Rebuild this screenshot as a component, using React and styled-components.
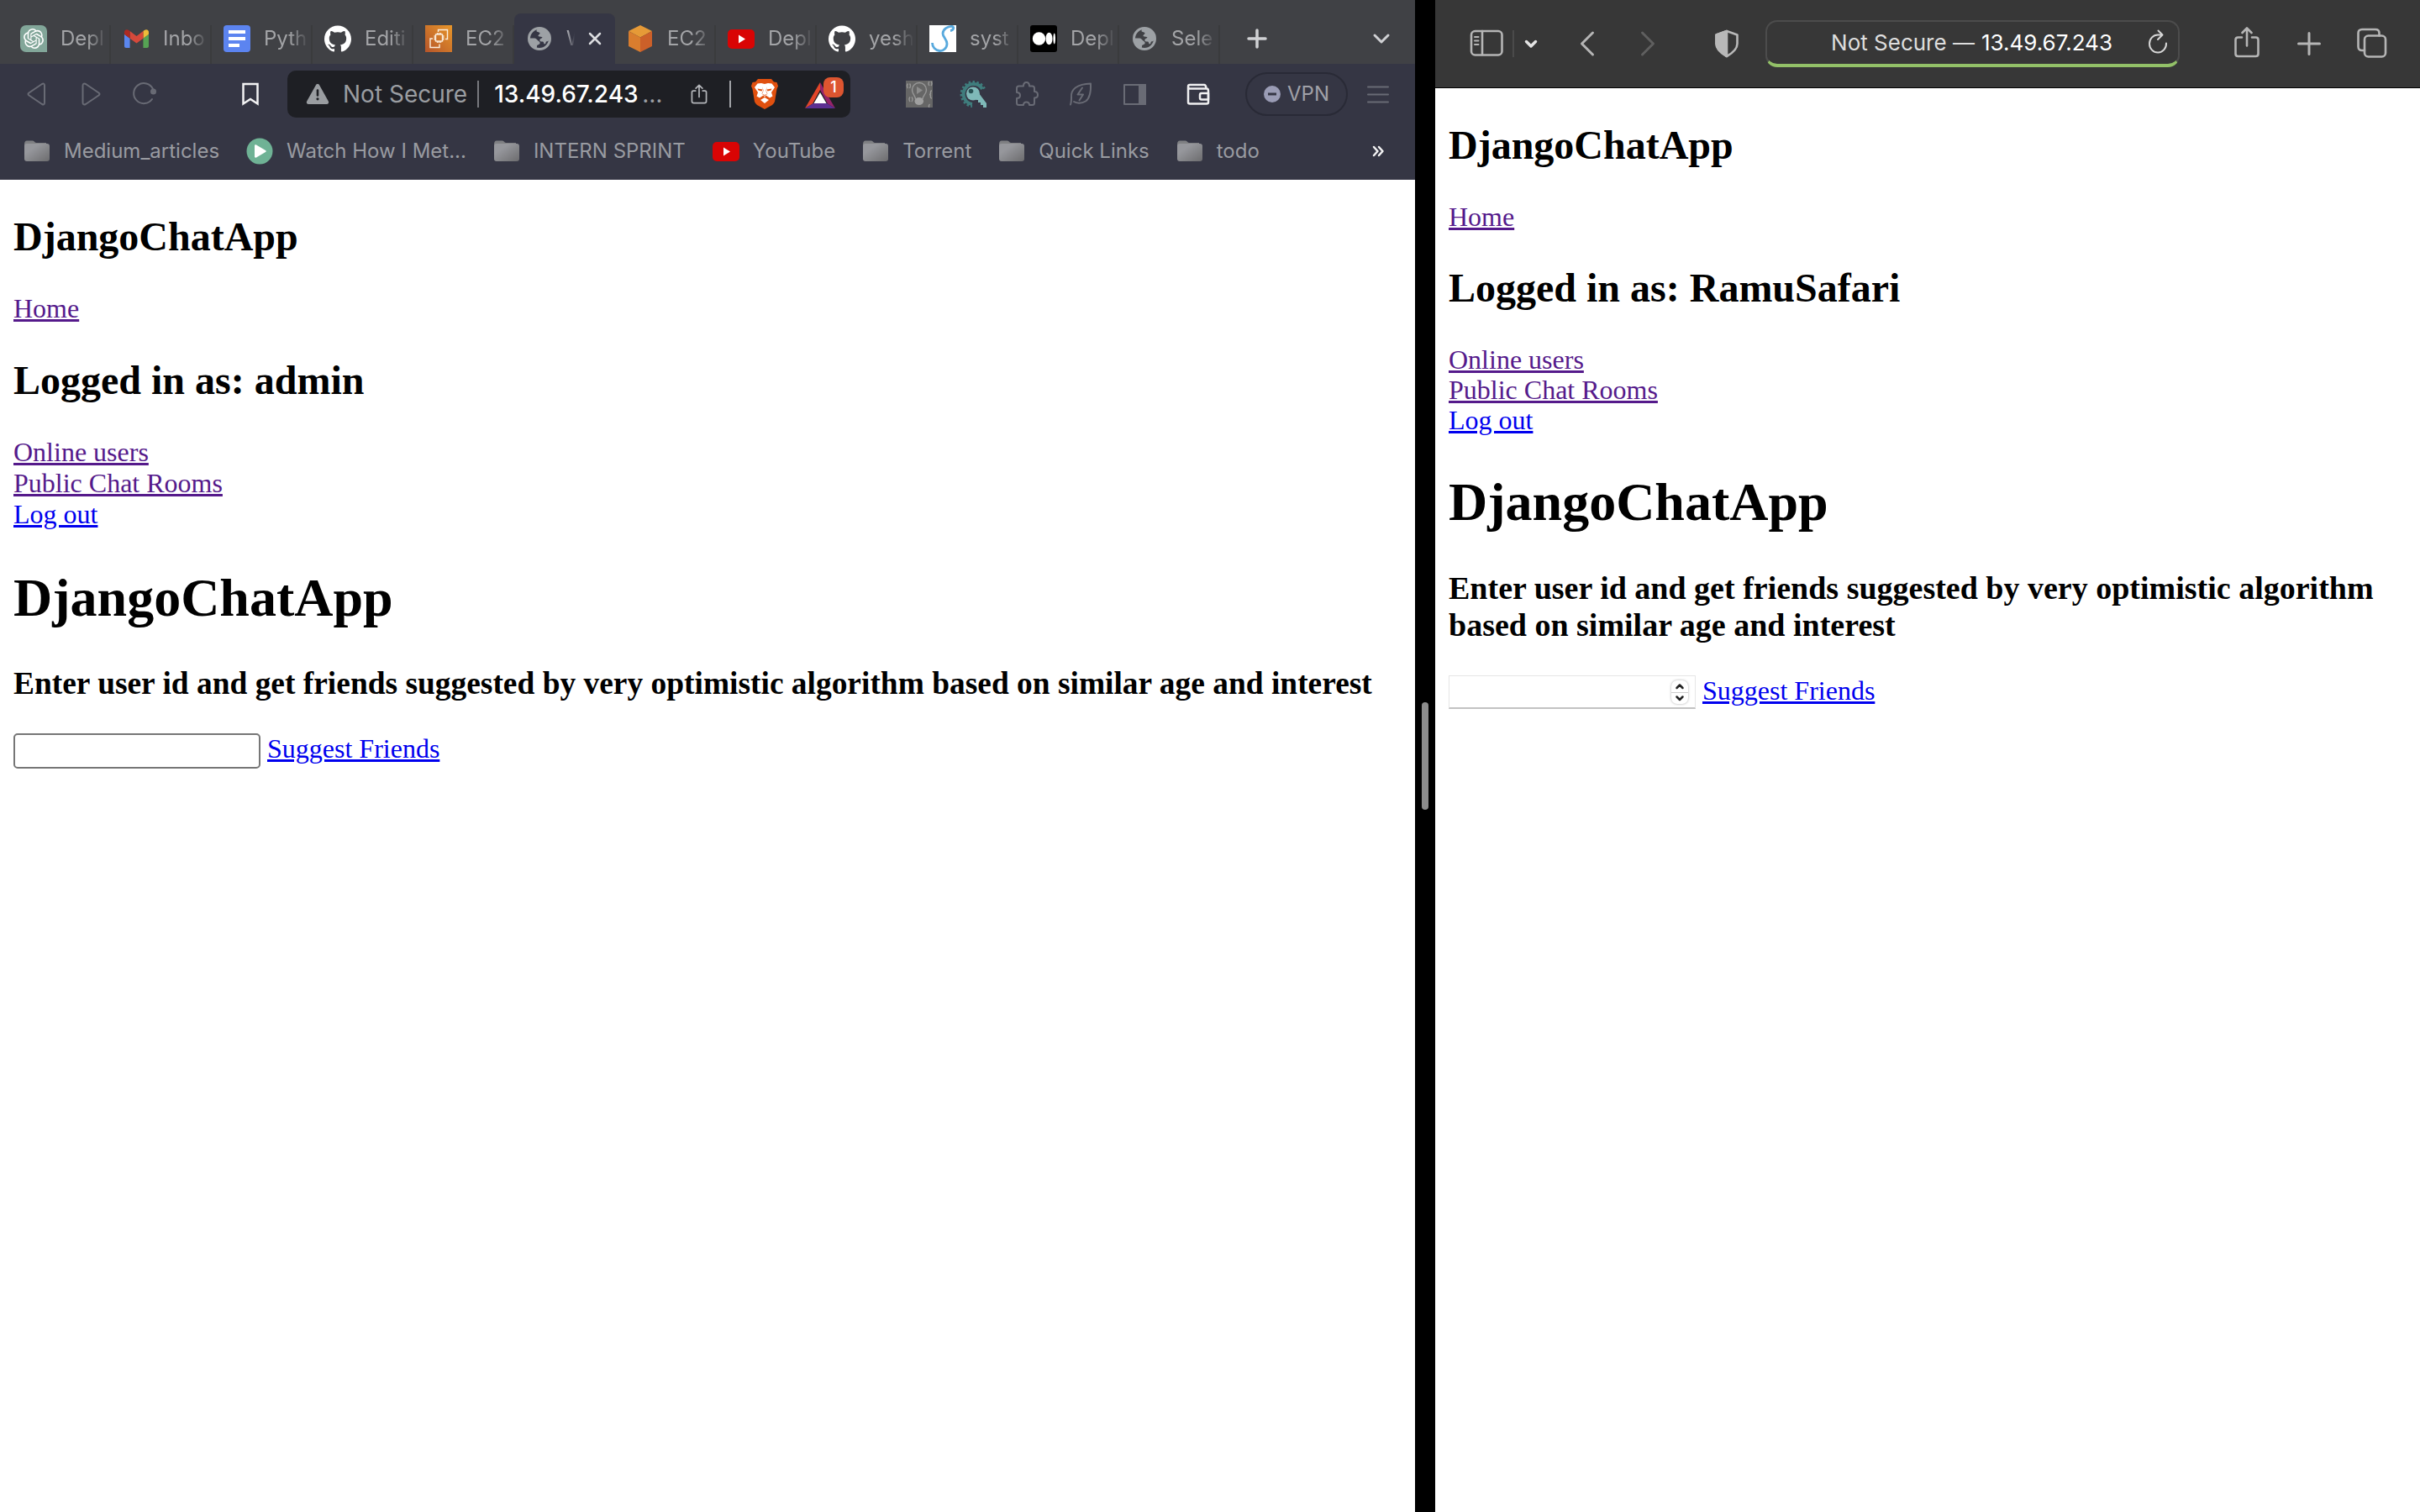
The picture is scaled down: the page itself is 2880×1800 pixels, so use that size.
import React from "react";
import styled, { createGlobalStyle } from "styled-components";
import { SiGithub, SiOpenai } from "react-icons/si";

const GlobalStyle = createGlobalStyle`
  body {
    margin: 0;
    background: #000;
  }
  *, *::before, *::after {
    box-sizing: border-box;
  }
`;

const ui = `Inter, Roboto, "Liberation Sans", sans-serif`;

/* ---------- split screen ---------- */

const SplitScreen = styled.div`
  display: grid;
  grid-template-columns: minmax(0, 1684fr) 24px minmax(0, 1172fr);
  min-height: 100vh;
`;

const Pane = styled.div`
  display: flex;
  flex-direction: column;
  background: #fff;
`;

const Divider = styled.div`
  display: flex;
  align-items: center;
  justify-content: center;
  background: #000;
`;

const Grip = styled.div`
  width: 8px;
  height: 128px;
  border-radius: 4px;
  background: #8c8c8c;
`;

const IconButton = styled.button`
  display: flex;
  flex: none;
  align-items: center;
  justify-content: center;
  width: ${(p) => p.$width || 32}px;
  height: ${(p) => p.$height || 32}px;
  margin: 0;
  padding: 0;
  border: 0;
  background: none;
  color: ${(p) => p.$color || "#696b75"};
  cursor: pointer;
`;

/* ---------- dark browser ---------- */

const TabStrip = styled.div`
  display: flex;
  align-items: flex-end;
  height: 76px;
  padding: 0 24px 0 10px;
  background: #404145;
`;

const Tabs = styled.div`
  display: flex;
  margin-right: 28px;
`;

const Tab = styled.div`
  display: flex;
  align-items: center;
  gap: 16px;
  width: 120px;
  height: 60px;
  padding: 0 4px 0 14px;
  border-radius: 8px 8px 0 0;
  color: #a3a4a7;
  background: ${(p) =>
    p.$active
      ? "#353644"
      : "linear-gradient(#3a3b3d, #3a3b3d) right bottom / 2px 46px no-repeat"};
  ${(p) => p.$active && "padding-right: 16px; color: #dcdde0;"}

  &:first-child {
    width: 122px;
  }
`;

const TabIcon = styled.span`
  display: flex;
  flex: none;
  align-items: center;
  justify-content: center;
  width: 32px;
  height: 32px;
`;

const TabTitle = styled.span`
  flex: 1;
  overflow: hidden;
  white-space: nowrap;
  font: 24px/32px ${ui};
  mask-image: linear-gradient(to left, transparent, #000 ${(p) => (p.$active ? 12 : 24)}px);
`;

const TabListButton = styled(IconButton)`
  margin-left: auto;
`;

const StripButtonRow = styled.div`
  display: flex;
  flex: 1;
  align-items: center;
  height: 60px;
`;

const Toolbar = styled.div`
  display: flex;
  align-items: center;
  padding: 8px 28px 6px;
  background: #353644;
`;

const ButtonGroup = styled.div`
  display: flex;
  align-items: center;
  gap: 32px;
`;

const AddressBar = styled.div`
  display: flex;
  flex: 1;
  align-items: center;
  min-width: 0;
  height: 56px;
  margin: 0 66px 0 28px;
  padding: 0 8px 0 22px;
  border-radius: 10px;
  background: #1e1f24;
  font: 28px/36px ${ui};
  color: #9a9da1;
`;

const SpacedGroup = styled(ButtonGroup)`
  margin-right: 94px;
`;

const SecurityNote = styled.span`
  flex: none;
  margin: 0 12px 0 16px;
`;

const Rule = styled.span`
  flex: none;
  width: 2px;
  height: 32px;
  background: ${(p) => p.$color || "#77797d"};
`;

const UrlInput = styled.input`
  flex: none;
  width: 176px;
  height: 36px;
  margin: 0 0 0 18px;
  padding: 0;
  border: 0;
  outline: 0;
  background: none;
  color: #fff;
  font: inherit;
  font-weight: 500;
`;

const AddressActions = styled.div`
  display: flex;
  align-items: center;
  gap: 24px;
  margin-left: auto;
`;

const RewardsButton = styled(IconButton)`
  position: relative;
  justify-content: flex-start;
  margin-left: 8px;
`;

const Badge = styled.span`
  position: absolute;
  top: 0;
  right: 0;
  width: 24px;
  height: 24px;
  border-radius: 8px;
  background: #dd5530;
  color: #fff;
  font: 500 18px/24px ${ui};
  text-align: center;
`;

const VpnButton = styled.button`
  display: flex;
  flex: none;
  align-items: center;
  justify-content: center;
  gap: 8px;
  width: 122px;
  height: 52px;
  margin: 0 20px 0 40px;
  padding: 0;
  border: 2px solid #292a36;
  border-radius: 26px;
  background: none;
  color: #a0a1a8;
  font: 24px/32px ${ui};
`;

const WalletButton = styled(IconButton)`
  margin-left: 44px;
`;

const BookmarksBar = styled.div`
  display: flex;
  align-items: center;
  gap: 32px;
  height: 68px;
  padding: 0 28px;
  background: #353644;
`;

const Bookmark = styled.a`
  display: flex;
  align-items: center;
  gap: 16px;
  color: #999ba1;
  font: 24px/32px ${ui};
  text-decoration: none;
  white-space: nowrap;
`;

const MoreBookmarks = styled(IconButton)`
  margin-left: auto;
`;

/* ---------- light browser ---------- */

const SafariBar = styled.div`
  display: flex;
  align-items: center;
  height: 105px;
  padding: 0 38px;
  border-bottom: 1px solid #000;
  background: #373737;
`;

const SafariAddress = styled.div`
  display: grid;
  grid-template-columns: 1fr auto 1fr;
  flex: 1;
  align-items: center;
  height: 56px;
  margin: 0 60px 0 28px;
  padding: 0 8px;
  border: 2px solid #4c4c4c;
  border-bottom: 4px solid #93c168;
  border-radius: 14px;
`;

const SafariUrl = styled.label`
  display: flex;
  grid-column: 2;
  gap: 8px;
  color: #dedede;
  font: 26px/32px ${ui};
`;

const SafariUrlInput = styled.input`
  width: 158px;
  padding: 0;
  border: 0;
  outline: 0;
  background: none;
  color: #fff;
  font: inherit;
`;

const ReloadButton = styled(IconButton)`
  justify-self: end;
`;

const SidebarGroup = styled.div`
  display: flex;
  align-items: center;
  gap: 10px;
`;

const NavGroup = styled.div`
  display: flex;
  align-items: center;
  gap: 40px;
  margin: 0 60px 0 41px;
`;

const SafariActions = styled.div`
  display: flex;
  align-items: center;
  gap: 34px;
`;

/* ---------- web page ---------- */

const Page = styled.main`
  padding: 0 16px;
  color: #000;
  font: 32px/${(p) => p.$lines.text}px "Liberation Serif", "Times New Roman", serif;
`;

const Title = styled.h1`
  line-height: ${(p) => p.$line}px;
`;

const Subtitle = styled.h2`
  line-height: ${(p) => p.$line}px;
`;

const Prompt = styled.h3`
  ${(p) => p.$size && `font-size: ${p.$size}px;`}
  line-height: ${(p) => p.$line}px;
`;

const PageLink = styled.a`
  color: ${(p) => (p.$visited ? "#551a8b" : "#0000ee")};
  text-decoration: underline;
`;

const LinkList = styled.div`
  display: flex;
  flex-direction: column;
  align-items: flex-start;
`;

const SuggestForm = styled.form`
  display: flex;
  align-items: flex-start;
  gap: 8px;
`;

const NumberInput = styled.input`
  width: 294px;
  height: 42px;
  padding: 0 8px;
  border: 2px solid #767676;
  border-radius: 5px;
  background: #fff;
  font: 26px/32px ${ui};
  appearance: textfield;

  &::-webkit-inner-spin-button {
    appearance: none;
  }
`;

const StepperField = styled.div`
  display: flex;
  align-items: center;
  width: 294px;
  height: 40px;
  padding-right: 8px;
  border: 1px solid #e6e6e6;
  border-bottom: 2px solid #c2c2c2;
`;

const BareNumberInput = styled(NumberInput)`
  flex: 1;
  width: 0;
  height: 32px;
  border: 0;
`;

const Stepper = styled.div`
  display: flex;
  flex-direction: column;
  width: 20px;
  height: 28px;
  border-radius: 7px;
  box-shadow: 0 0 3px #aaa;
  overflow: hidden;
`;

const StepButton = styled(IconButton)`
  border-top: ${(p) => (p.$divided ? "1px solid #ccc" : "0")};
`;

/* ---------- icons ---------- */

const OpenAiIcon = () => (
  <svg width="32" height="32" viewBox="0 0 32 32">
    <path d="M7 0H25A7 7 0 0 1 32 7V32H7A7 7 0 0 1 0 25V7A7 7 0 0 1 7 0Z" fill="#82a699" />
    <SiOpenai x="4" y="4" size={24} color="#fff" />
  </svg>
);

const GmailIcon = () => (
  <svg width="29" height="22" viewBox="52 42 88 66">
    <path fill="#5b87ee" d="M58 108h14V74L52 59v43c0 3.3 2.7 6 6 6" />
    <path fill="#56a354" d="M120 108h14c3.3 0 6-2.7 6-6V59l-20 15" />
    <path fill="#eebc3a" d="M120 48v26l20-15v-8c0-7.4-8.5-11.6-14.4-7.2" />
    <path fill="#d6493b" d="M72 74V48l24 18 24-18v26L96 92" />
    <path fill="#ad2a22" d="M52 51v8l20 15V48l-5.6-4.2C60.500 39.400 52 43.600 52 51" />
  </svg>
);

const DocsIcon = () => (
  <svg width="32" height="32" viewBox="0 0 32 32">
    <rect width="32" height="32" rx="4" fill="#5c84f0" />
    <path d="M6 6H26V10H6ZM6 14H26V18H6ZM6 22H19V26H6Z" fill="#fff" />
  </svg>
);

const Ec2Icon = () => (
  <svg width="32" height="32" viewBox="0 0 32 32">
    <defs>
      <linearGradient id="ec2" x1="0" y1="1" x2="1" y2="0">
        <stop offset="0" stopColor="#b5552a" />
        <stop offset="1" stopColor="#e8962a" />
      </linearGradient>
    </defs>
    <rect width="32" height="32" fill="url(#ec2)" />
    <g fill="none" stroke="#fbeede" strokeWidth="1.4">
      <rect x="12.500" y="11" width="8" height="8" />
      <path d="M14.500 9V11M16.500 9V11M18.500 9V11M14.500 19V21M16.500 19V21M18.500 19V21M10.500 13H12.500M10.500 15H12.500M10.500 17H12.500M20.500 13H22.500M20.500 15H22.500M20.500 17H22.500" />
      <path d="M15.500 8V5.500H26.500V16.500H24M9 16H6V26.500H17V22.500" />
    </g>
  </svg>
);

const GlobeIcon = () => (
  <svg width="28" height="28" viewBox="0 0 28 28">
    <circle cx="14" cy="14" r="12.500" fill="none" stroke="#9da1a5" strokeWidth="3" />
    <path
      fill="#9da1a5"
      d="M14 1C20 1 27 6 27 14C26 16 24 17.500 22 17.500C21 19 22 20 20 20.500C18.500 19.500 19.500 18 18 17.500H16C14.500 17.500 14 16 14.500 15C15 13.500 17 14 17.500 12.500C17 11.500 14 12 12.500 11C12 9.500 14.500 9 14.500 7.500C14.500 6 11 6.500 10.500 5C10.500 3 12 2 14 1Z"
    />
    <path
      fill="#9da1a5"
      d="M1.500 13.500H8C10 13.500 11 15 12.500 16.500C14 17.500 15 18 14.500 20C13.500 21.500 11.500 21 11 22.500C11 24 11 25 10 26C5 24 1.500 19 1.500 13.500Z"
    />
  </svg>
);

const CubeIcon = () => (
  <svg width="28" height="32" viewBox="0 0 28 32">
    <path d="M14 0L28 7L14 14.500L0 7Z" fill="#e69a37" />
    <path d="M0 7L14 14.500V32L0 25Z" fill="#d97d2e" />
    <path d="M28 7L14 14.500V32L28 25Z" fill="#cc6029" />
  </svg>
);

const YouTubeIcon = () => (
  <svg width="32" height="23" viewBox="0 0 32 23">
    <rect width="32" height="23" rx="5" fill="#d90404" />
    <path d="M13 6.500L21 11.500L13 16.500Z" fill="#fff" />
  </svg>
);

const SwirlIcon = () => (
  <svg width="32" height="32" viewBox="0 0 32 32">
    <rect width="32" height="32" fill="#fff" />
    <path
      d="M25 6.500C29 6 30 2 27 1.500C22 1 16 5 16 10C16 14 21 17 21 22C21 27 17 31 12 30.500C7 30 3.500 26 3.500 21"
      fill="none"
      stroke="#58a9dd"
      strokeWidth="2.800"
    />
  </svg>
);

const MediumIcon = () => (
  <svg width="32" height="32" viewBox="0 0 32 32">
    <rect width="32" height="32" rx="3" fill="#000" />
    <circle cx="10.500" cy="16" r="7.700" fill="#fff" />
    <ellipse cx="22.500" cy="16" rx="4" ry="7.300" fill="#fff" />
    <ellipse cx="28.700" cy="16" rx="1.300" ry="6.500" fill="#fff" />
  </svg>
);

const FolderIcon = () => (
  <svg width="32" height="32" viewBox="0 0 32 32">
    <defs>
      <linearGradient id="folder" x1="0" y1="0" x2="1" y2="1">
        <stop offset="0.300" stopColor="#96979c" />
        <stop offset="1" stopColor="#6c6c6e" />
      </linearGradient>
    </defs>
    <path d="M1 8C1 5 2 3.500 4 3.500H11C13 3.500 13 6 15 6H27V12H1Z" fill="#7f8083" />
    <rect x="1" y="7" width="30" height="21" rx="3" fill="url(#folder)" />
  </svg>
);

const PlayCircleIcon = () => (
  <svg width="32" height="32" viewBox="0 0 32 32">
    <circle cx="16" cy="16" r="15.500" fill="#6fb295" />
    <path d="M10 9.500C10 8.500 11 8 12 8.500L23 15C24 15.500 24 16.500 23 17L12 23.500C11 24 10 23.500 10 22.500Z" fill="#fff" />
  </svg>
);

const strokeProps = {
  fill: "none",
  stroke: "currentColor",
  strokeLinecap: "round",
  strokeLinejoin: "round",
};

const Drawing = ({ size = 32, line = 2, children }) => (
  <svg width={size} height={size} viewBox={`0 0 ${size} ${size}`} {...strokeProps} strokeWidth={line}>
    {children}
  </svg>
);

const PlusIcon = ({ line, reach }) => (
  <Drawing line={line}>
    <path d={`M16 ${16 - reach}V${16 + reach}M${16 - reach} 16H${16 + reach}`} />
  </Drawing>
);

const WarningIcon = () => (
  <svg width="28" height="28" viewBox="0 0 28 28">
    <path d="M11.800 3.500C12.800 1.600 15.200 1.600 16.200 3.500L26.800 22.500C27.800 24.500 26.500 26 24.500 26H3.500C1.500 26 0.200 24.500 1.200 22.500Z" fill="#9a9da1" />
    <path d="M14 9.500V15.500" stroke="#1e1f24" strokeWidth="2.600" strokeLinecap="round" />
    <circle cx="14" cy="19.800" r="1.600" fill="#1e1f24" />
  </svg>
);

const BraveIcon = () => (
  <svg width="32" height="36" viewBox="0 0 32 36">
    <path d="M8 0H24L27 3.500L30.500 4L32 8.500L30.500 12L28 27Q27 29.500 25 31L16 36L7 31Q5 29.500 4 27L1.500 12L0 8.500L1.500 4L5 3.500Z" fill="#e0500f" />
    <path d="M7.500 5.500L12 5L16 6L20 5L24.500 5.500L28 10L24 16L25.500 20.500L22 22.500L17.500 19.500L16 21.500L14.500 19.500L10 22.500L6.500 20.500L8 16L4 10Z" fill="#fff" />
    <path d="M16 22L21 25L16 29L11 25Z" fill="#fff" />
    <path d="M7.500 11.500L13.500 12.500L12.500 14.500L8.500 13.500ZM24.500 11.500L18.500 12.500L19.500 14.500L23.500 13.500ZM13.500 9L14.500 14L13 18L16 20L19 18L17.500 14L18.500 9L18 14.500L19.500 17.500L16 19L12.500 17.500L14 14.500Z" fill="#e0500f" />
  </svg>
);

const RewardsIcon = () => (
  <svg width="36" height="36" viewBox="0 0 36 36">
    <path d="M18 4L0 35L9 29.500L18 13Z" fill="#e2452a" />
    <path d="M18 4L36 35L27 29.500L18 13Z" fill="#95236a" />
    <path d="M0 35H36L26 29H10Z" fill="#5c2f91" />
    <path d="M18 16L25.500 29H10.500Z" fill="#fff" />
  </svg>
);

const BulbIcon = () => (
  <svg width="32" height="32" viewBox="0 0 32 32">
    <rect width="32" height="32" fill="#666" />
    <g fill="none" stroke="#989898" strokeWidth="1.400">
      <path d="M11.500 22C11.500 18 7.500 16 7.500 11A8.500 8.500 0 0 1 24.500 11C24.500 16 20 18 20 22" />
      <path d="M2.500 3.500Q0.500 6 2.500 9M4.500 3.500Q6.500 6 4.500 9M28 1Q26 3.500 28 6M30 1Q32 3.500 30 6M5 19.500Q3 22 5 25M7 19.500Q9 22 7 25M31 12Q29 12 29.500 15Q29.500 16.500 28 16.500Q29.500 16.500 29.500 18Q29 21 31 21M28.500 28Q26.500 30 28 32" />
    </g>
    <path d="M13 7L20 11.500L13 16Z" fill="#8d8d8d" />
    <ellipse cx="15.800" cy="24.500" rx="5.300" ry="4.500" fill="#a0a0a0" />
  </svg>
);

const KeyIcon = () => (
  <svg width="32" height="32" viewBox="0 0 32 32">
    <path d="M27 10A12 12 0 1 0 15 28" fill="none" stroke="#3f7d7d" strokeWidth="4" />
    <path d="M29.500 9.500A14.500 14.500 0 1 0 15 30.500" fill="none" stroke="#3f7d7d" strokeWidth="3" strokeDasharray="2.400 2.400" />
    <path d="M18 20L23 15L32 27V32H28V29H25V26H22V23H20Z" fill="#7fb9b8" />
    <circle cx="16" cy="15.500" r="8" fill="#7fb9b8" />
    <circle cx="13.500" cy="12.500" r="2.800" fill="#2a5456" />
  </svg>
);

const bookmarks = [
  { title: "Medium_articles", icon: FolderIcon },
  { title: "Watch How I Met...", icon: PlayCircleIcon },
  { title: "INTERN SPRINT", icon: FolderIcon },
  { title: "YouTube", icon: YouTubeIcon },
  { title: "Torrent", icon: FolderIcon },
  { title: "Quick Links", icon: FolderIcon },
  { title: "todo", icon: FolderIcon },
];

const WhiteGithub = () => <SiGithub size={32} color="#fff" />;

const tabs = [
  { title: "Depl", icon: OpenAiIcon },
  { title: "Inbo", icon: GmailIcon },
  { title: "Pyth", icon: DocsIcon },
  { title: "Editi", icon: WhiteGithub },
  { title: "EC2", icon: Ec2Icon },
  { title: "W", icon: GlobeIcon, active: true },
  { title: "EC2", icon: CubeIcon },
  { title: "Depl", icon: YouTubeIcon },
  { title: "yesh", icon: WhiteGithub },
  { title: "syst", icon: SwirlIcon },
  { title: "Depl", icon: MediumIcon },
  { title: "Sele", icon: GlobeIcon },
];

function BrowserTabs() {
  return (
    <TabStrip>
      <Tabs role="tablist">
        {tabs.map((tab, i) => (
          <Tab key={i} role="tab" aria-selected={!!tab.active} $active={tab.active}>
            <TabIcon>
              <tab.icon />
            </TabIcon>
            <TabTitle $active={tab.active}>{tab.title}</TabTitle>
            {tab.active && (
              <IconButton $width={16} $color="#dcdde0" aria-label="Close tab">
                <Drawing size={16} line={2.5}>
                  <path d="M2 2L14 14M14 2L2 14" />
                </Drawing>
              </IconButton>
            )}
          </Tab>
        ))}
      </Tabs>
      <StripButtonRow>
        <IconButton $color="#d0d1d4" aria-label="New tab">
          <PlusIcon line={3.5} reach={10} />
        </IconButton>
        <TabListButton $color="#d0d1d4" aria-label="Search tabs">
          <Drawing line={3}>
            <path d="M8 12L16 20L24 12" />
          </Drawing>
        </TabListButton>
      </StripButtonRow>
    </TabStrip>
  );
}

function BrowserToolbar() {
  return (
    <Toolbar>
      <SpacedGroup>
        <IconButton aria-label="Back">
          <Drawing>
            <path d="M6.500 14.500L22 4Q25 2.500 25 6V26Q25 29.500 22 28L6.500 17.500Q4.500 16 6.500 14.500Z" />
          </Drawing>
        </IconButton>
        <IconButton aria-label="Forward">
          <Drawing>
            <path d="M25.500 14.500L10 4Q6.500 2.500 6.500 6V26Q6.500 29.500 10 28L25.500 17.500Q27.500 16 25.500 14.500Z" />
          </Drawing>
        </IconButton>
        <IconButton aria-label="Reload">
          <Drawing>
            <path d="M25 22A12 12 0 1 1 26 10" />
            <circle cx="26.500" cy="13" r="2.500" fill="currentColor" stroke="currentColor" />
          </Drawing>
        </IconButton>
      </SpacedGroup>
      <IconButton $color="#f2f2f3" aria-label="Bookmark this page">
        <Drawing line={2.5}>
          <path strokeLinejoin="miter" d="M7.500 4H24.500V27.500L16 22L7.500 27.500Z" />
        </Drawing>
      </IconButton>
      <AddressBar>
        <WarningIcon />
        <SecurityNote>Not Secure</SecurityNote>
        <Rule />
        <UrlInput aria-label="Address" defaultValue="13.49.67.243" />
        <span>…</span>
        <AddressActions>
          <IconButton $width={24} $color="#b4b6ba" aria-label="Share">
            <Drawing size={28}>
              <path d="M9 9.500H6Q4 9.500 4 11.500V24Q4 26.500 6.500 26.500H21.500Q24 26.500 24 24V11.500Q24 9.500 22 9.500H19M14 18V2M9.500 6L14 1.500L18.500 6" />
            </Drawing>
          </IconButton>
          <Rule $color="#a2a4a8" />
          <IconButton aria-label="Brave Shields">
            <BraveIcon />
          </IconButton>
          <RewardsButton $width={46} $height={40} aria-label="Rewards">
            <RewardsIcon />
            <Badge>1</Badge>
          </RewardsButton>
        </AddressActions>
      </AddressBar>
      <ButtonGroup>
        <IconButton aria-label="Code player">
          <BulbIcon />
        </IconButton>
        <IconButton aria-label="Key manager">
          <KeyIcon />
        </IconButton>
        <IconButton aria-label="Extensions">
          <Drawing>
            <path d="M4 9Q4 6.500 6.500 6.500H12Q12 2 15.500 2Q19 2 19 6.500H22.500Q25 6.500 25 9V13Q29 13 29 17Q29 20.500 25 20.500V26.500Q25 29 22.500 29H19Q19 25.500 15.500 25.500Q12 25.500 12 29H6.500Q4 29 4 26.500V21Q8 21 8 17.500Q8 14 4 14Z" />
          </Drawing>
        </IconButton>
        <IconButton aria-label="Power saver">
          <Drawing>
            <path d="M4 28.500C5 26 5 24 5 20C4 10 12 4 28 3.500C28.500 15 27 21 22 24.500C17 27.500 11 27 8 25" />
            <path d="M18 8.500L12.500 16.500H19L14.500 23.500" />
          </Drawing>
        </IconButton>
        <IconButton aria-label="Sidebar">
          <Drawing>
            <rect x="4" y="5" width="25" height="23" />
            <rect x="22" y="5" width="7" height="23" fill="currentColor" />
          </Drawing>
        </IconButton>
      </ButtonGroup>
      <WalletButton $color="#f0f0f1" aria-label="Wallet">
        <Drawing line={2.5}>
          <path d="M4 8V25.500Q4 27.500 6 27.500H26Q28 27.500 28 25.500V12.500Q28 9.500 26 9.500H6Q4 9.500 4 7Q4 5 6 5H23Q25 5 25.500 9" />
          <path d="M28 15H20Q18 15 18 17V20.500Q18 22.500 20 22.500H28Z" />
        </Drawing>
      </WalletButton>
      <VpnButton>
        <svg width="20" height="20" viewBox="0 0 20 20">
          <circle cx="10" cy="10" r="10" fill="#9a9cb5" />
          <path d="M5 10H15" stroke="#353644" strokeWidth="3" />
        </svg>
        VPN
      </VpnButton>
      <IconButton aria-label="Menu">
        <Drawing>
          <path d="M4 7.500H28M4 16.500H28M4 25.500H28" />
        </Drawing>
      </IconButton>
    </Toolbar>
  );
}

function SafariToolbar() {
  return (
    <SafariBar>
      <SidebarGroup>
        <IconButton $width={44} $height={36} $color="#b5b5b5" aria-label="Show sidebar">
          <svg width="44" height="36" viewBox="0 0 44 36" {...strokeProps} strokeWidth="2.600">
            <rect x="5" y="3" width="36.500" height="28.500" rx="4.500" />
            <path d="M18 3V31" />
            <path strokeWidth="2" d="M9 10H13.500M9 14.500H13.500M9 19H13.500" />
          </svg>
        </IconButton>
        <Rule $color="#4a4a4a" />
        <IconButton $width={20} $color="#e4e4e4" aria-label="Tab groups">
          <Drawing size={20} line={3.5}>
            <path d="M4.500 7.500L10 13L15.500 7.500" />
          </Drawing>
        </IconButton>
      </SidebarGroup>
      <NavGroup>
        <IconButton $color="#b5b5b5" aria-label="Back">
          <Drawing line={3}>
            <path d="M22.500 3L9.500 16L22.500 29" />
          </Drawing>
        </IconButton>
        <IconButton $color="#5f5f5f" aria-label="Forward">
          <Drawing line={3}>
            <path d="M9.500 3L22.500 16L9.500 29" />
          </Drawing>
        </IconButton>
      </NavGroup>
      <IconButton $width={36} $height={36} $color="#b8b8b8" aria-label="Privacy report">
        <Drawing size={36} line={2.6}>
          <path d="M18 3L30.500 7.500V18Q30.500 26 18 33Q5.500 26 5.500 18V7.500Z" />
          <path fill="currentColor" d="M18 3V33Q5.500 26 5.500 18V7.500Z" />
        </Drawing>
      </IconButton>
      <SafariAddress>
        <SafariUrl>
          Not Secure —
          <SafariUrlInput defaultValue="13.49.67.243" />
        </SafariUrl>
        <ReloadButton $color="#d6d6d6" aria-label="Reload">
          <Drawing line={2}>
            <path d="M26 16.500A10 10.500 0 1 1 16 6.500H21M16.500 1.500L21.500 6.500L16 12" />
          </Drawing>
        </ReloadButton>
      </SafariAddress>
      <SafariActions>
        <IconButton $width={40} $height={40} $color="#b5b5b5" aria-label="Share">
          <Drawing size={40} line={2.6}>
            <path d="M14 12.500H9.500Q6.500 12.500 6.500 15.500V32Q6.500 35 9.500 35H30.500Q33.500 35 33.500 32V15.500Q33.500 12.500 30.500 12.500H26M20 22.500V1.500M14.500 7L20 1.500L25.500 7" />
          </Drawing>
        </IconButton>
        <IconButton $width={40} $height={40} $color="#b5b5b5" aria-label="New tab">
          <PlusIcon line={3} reach={12.5} />
        </IconButton>
        <IconButton $width={40} $height={40} $color="#b5b5b5" aria-label="Show all tabs">
          <Drawing size={40} line={2.6}>
            <path d="M12 28H9Q4.500 28 4.500 23.500V7.500Q4.500 3 9 3H25Q29.500 3 29.500 7.500V10.500" />
            <rect x="12" y="10.500" width="25" height="25" rx="4.500" />
          </Drawing>
        </IconButton>
      </SafariActions>
    </SafariBar>
  );
}

function ChatPage({ user, lines, promptSize, fieldId, children }) {
  return (
    <Page $lines={lines}>
      <Subtitle $line={lines.h2}>DjangoChatApp</Subtitle>
      <PageLink href="#home" $visited>
        Home
      </PageLink>
      <Subtitle $line={lines.h2}>Logged in as: {user}</Subtitle>
      <LinkList>
        <PageLink href="#users" $visited>
          Online users
        </PageLink>
        <PageLink href="#rooms" $visited>
          Public Chat Rooms
        </PageLink>
        <PageLink href="#logout">Log out</PageLink>
      </LinkList>
      <Title $line={lines.h1}>DjangoChatApp</Title>
      <Prompt $line={lines.h3} $size={promptSize}>
        <label htmlFor={fieldId}>
          Enter user id and get friends suggested by very optimistic algorithm based on similar age and interest
        </label>
      </Prompt>
      <SuggestForm>
        {children}
        <PageLink href="#suggest">Suggest Friends</PageLink>
      </SuggestForm>
    </Page>
  );
}

export default function App() {
  return (
    <>
      <GlobalStyle />
      <SplitScreen>
        <Pane>
          <BrowserTabs />
          <BrowserToolbar />
          <BookmarksBar>
            {bookmarks.map((b) => (
              <Bookmark key={b.title} href="#bookmark">
                <TabIcon>
                  <b.icon />
                </TabIcon>
                {b.title}
              </Bookmark>
            ))}
            <MoreBookmarks $color="#f2f2f3" aria-label="More bookmarks">
              <Drawing line={2.5}>
                <path d="M11 11L15.500 16L11 21M17 11L21.500 16L17 21" />
              </Drawing>
            </MoreBookmarks>
          </BookmarksBar>
          <ChatPage user="admin" fieldId="user-id-left" lines={{ text: 37, h1: 75, h2: 55, h3: 43 }}>
            <NumberInput id="user-id-left" type="number" />
          </ChatPage>
        </Pane>
        <Divider>
          <Grip />
        </Divider>
        <Pane>
          <SafariToolbar />
          <ChatPage
            user="RamuSafari"
            fieldId="user-id-right"
            lines={{ text: 36, h1: 74, h2: 55, h3: 44 }}
            promptSize={38}
          >
            <StepperField>
              <BareNumberInput id="user-id-right" type="number" />
              <Stepper>
                <StepButton type="button" $width={20} $height={14} $color="#222" aria-label="Increase">
                  <Drawing size={12} line={2.5}>
                    <path d="M2.500 8L6 4.500L9.500 8" />
                  </Drawing>
                </StepButton>
                <StepButton type="button" $divided $width={20} $height={14} $color="#222" aria-label="Decrease">
                  <Drawing size={12} line={2.5}>
                    <path d="M2.500 4.500L6 8L9.500 4.500" />
                  </Drawing>
                </StepButton>
              </Stepper>
            </StepperField>
          </ChatPage>
        </Pane>
      </SplitScreen>
    </>
  );
}
